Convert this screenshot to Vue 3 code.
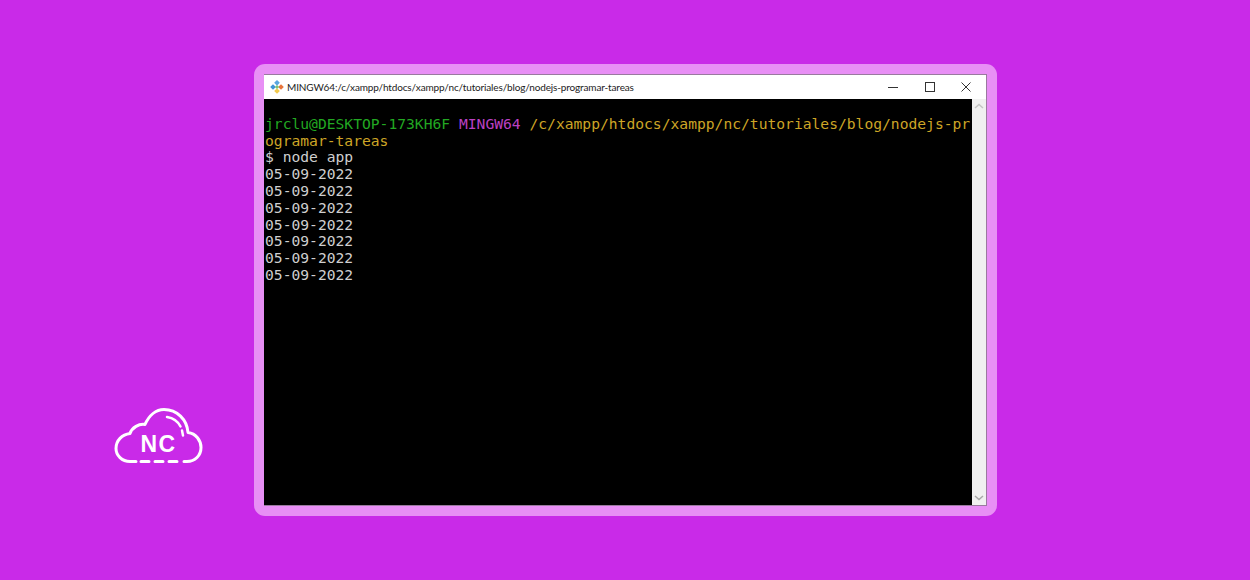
<script setup>
const dates = Array(7).fill('05-09-2022')
</script>

<template>
  <div class="page">
    <div class="logo-wrap">
      <svg class="logo" width="89" height="58" viewBox="0 0 89 58" fill="none" stroke="#fff" stroke-width="3" stroke-linecap="round" stroke-linejoin="round">
        <path d="M22 54.500 H16 C8 54.500 2 48.500 2 41.500 C2 33.500 8 27.500 16 26.500 C18 20.500 25 16.500 31 17.500 C35 8.500 42 2.500 50 2.500 C63 2.500 73 12.500 74 25.500 C82 26.500 87 33.500 87 40.500 C87 48.500 81 54.500 73 54.500 H70" />
        <path d="M27 54.500 H35 M41 54.500 H49 M55 54.500 H63" />
        <path d="M53 10 C59 11 64 14.500 66.500 19.500" stroke-width="2.500" />
        <path d="M68 23.500 L69 28.500" stroke-width="2.500" />
        <text x="44.500" y="44.500" text-anchor="middle" class="logo-text">NC</text>
      </svg>
    </div>
    <div class="frame">
      <div class="window">
        <div class="titlebar">
          <svg class="git-icon" width="14" height="14" viewBox="0 0 14 14">
            <rect x="5" y="0.800" width="4" height="4" fill="#5aa6e0" transform="rotate(45 7 2.800)" />
            <rect x="1" y="5" width="4" height="4" fill="#3f93d6" transform="rotate(45 3 7)" />
            <rect x="9" y="5" width="4" height="4" fill="#e8743b" transform="rotate(45 11 7)" />
            <rect x="5" y="9" width="4" height="4" fill="#f2c94c" transform="rotate(45 7 11)" />
            <rect x="5.500" y="5.500" width="3" height="3" fill="#7cc47c" transform="rotate(45 7 7)" />
          </svg>
          <span class="title">MINGW64:/c/xampp/htdocs/xampp/nc/tutoriales/blog/nodejs-programar-tareas</span>
          <div class="controls">
            <svg width="10" height="10" viewBox="0 0 10 10" stroke="#333" fill="none"><path d="M0 5.500H10" /></svg>
            <svg width="10" height="10" viewBox="0 0 10 10" stroke="#333" fill="none"><rect x="0.500" y="0.500" width="9" height="9" /></svg>
            <svg width="10" height="10" viewBox="0 0 10 10" stroke="#333" fill="none"><path d="M0.500 0.500L9.500 9.500M9.500 0.500L0.500 9.500" /></svg>
          </div>
        </div>
        <div class="body">
          <div class="terminal">
            <div class="line">&nbsp;</div>
            <div class="line"><span class="green">jrclu@DESKTOP-173KH6F</span> <span class="purple">MINGW64</span> <span class="yellow">/c/xampp/htdocs/xampp/nc/tutoriales/blog/nodejs-pr</span></div>
            <div class="line yellow">ogramar-tareas</div>
            <div class="line">$ node app</div>
            <div v-for="(d, i) in dates" :key="i" class="line">{{ d }}</div>
          </div>
          <div class="scrollbar">
            <svg width="10" height="6" viewBox="0 0 10 6" fill="none" stroke="#c4c4c4" stroke-width="1.500"><path d="M1 5L5 1.500L9 5" /></svg>
            <svg width="10" height="6" viewBox="0 0 10 6" fill="none" stroke="#a8a8a8" stroke-width="1.500"><path d="M1 1L5 4.500L9 1" /></svg>
          </div>
        </div>
      </div>
    </div>
  </div>
</template>

<style scoped>
.page {
  width: 1250px;
  height: 580px;
  background: #c92ae8;
  box-sizing: border-box;
  padding: 64px 0 0 114px;
  display: flex;
  align-items: flex-start;
  overflow: hidden;
}
.logo-wrap {
  width: 140px;
  padding-top: 343px;
  flex: none;
}
.logo { display: block; }
.logo-text {
  font-family: "Liberation Sans", Arial, sans-serif;
  font-weight: 700;
  font-size: 23px;
  letter-spacing: 1.500px;
  fill: #fff;
  stroke: none;
}
.frame {
  width: 743px;
  height: 452px;
  box-sizing: border-box;
  padding: 10px;
  background: #e88ff5;
  border-radius: 11px;
}
.window {
  height: 100%;
  box-sizing: border-box;
  background: #fff;
  border: 1px solid #9a7a9f;
  border-left: 0;
  display: flex;
  flex-direction: column;
}
.titlebar {
  height: 24px;
  flex: none;
  display: flex;
  align-items: center;
  padding-left: 6px;
}
.git-icon { flex: none; }
.title {
  margin-left: 3px;
  font-family: "Lato", "Liberation Sans", sans-serif;
  font-size: 10px;
  letter-spacing: -0.150px;
  color: #222;
  white-space: nowrap;
}
.controls {
  margin-left: auto;
  width: 98px;
  padding-right: 15px;
  box-sizing: border-box;
  display: flex;
  justify-content: space-between;
}
.body {
  flex: 1;
  min-height: 0;
  display: flex;
}
.terminal {
  flex: 1;
  background: #000;
  padding-left: 1px;
  font-family: "DejaVu Sans Mono", "Liberation Mono", monospace;
  font-size: 14.650px;
  line-height: 16.800px;
  color: #cfcfcf;
  white-space: pre;
  overflow: hidden;
}
.line { height: 16.800px; }
.green { color: #22a822; }
.purple { color: #bb40c4; }
.yellow { color: #cda526; }
.scrollbar {
  width: 14px;
  flex: none;
  background: #f0f0f0;
  display: flex;
  flex-direction: column;
  justify-content: space-between;
  align-items: center;
  padding: 4px 0;
  box-sizing: border-box;
}
</style>
